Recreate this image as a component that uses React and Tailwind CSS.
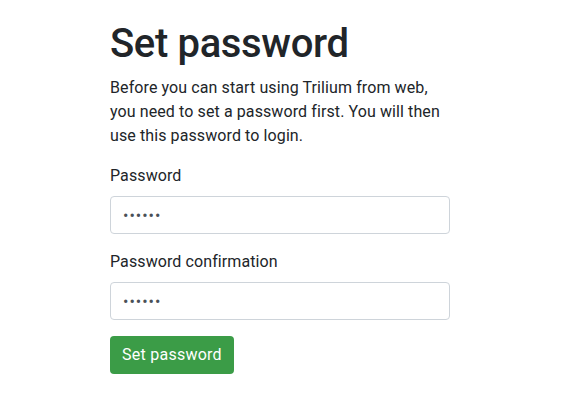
export default function App() {
  return (
    <div className="min-h-[411px] bg-white text-[#212529]" style={{ fontFamily: 'Roboto, "Liberation Sans", sans-serif' }}>
      <div className="ml-[110px] w-[340px] pt-[20px]">
        <h1 className="mb-2 text-[40px] font-medium leading-[48px] tracking-[-0.35px]">Set password</h1>
        <p className="mb-4 text-[16px] leading-6 tracking-[0.1px]">
          Before you can start using Trilium from web, you need to set a password first. You will then use this password to login.
        </p>
        <div className="mb-4">
          <label className="mb-2 block text-[16px] leading-6 tracking-[0.1px]">Password</label>
          <input
            type="password"
            readOnly
            value="123456"
            className="block h-[38px] w-full rounded-[4px] border border-[#ced4da] bg-white px-3 text-[16px] tracking-[1px] text-[#495057] outline-none"
          />
        </div>
        <div className="mb-4">
          <label className="mb-2 block text-[16px] leading-6 tracking-[0.1px]">Password confirmation</label>
          <input
            type="password"
            readOnly
            value="123456"
            className="block h-[38px] w-full rounded-[4px] border border-[#ced4da] bg-white px-3 text-[16px] tracking-[1px] text-[#495057] outline-none"
          />
        </div>
        <button className="h-[38px] rounded-[4px] bg-[#3b9c47] px-3 text-[16px] leading-6 tracking-[0.25px] text-white">Set password</button>
      </div>
    </div>
  );
}
